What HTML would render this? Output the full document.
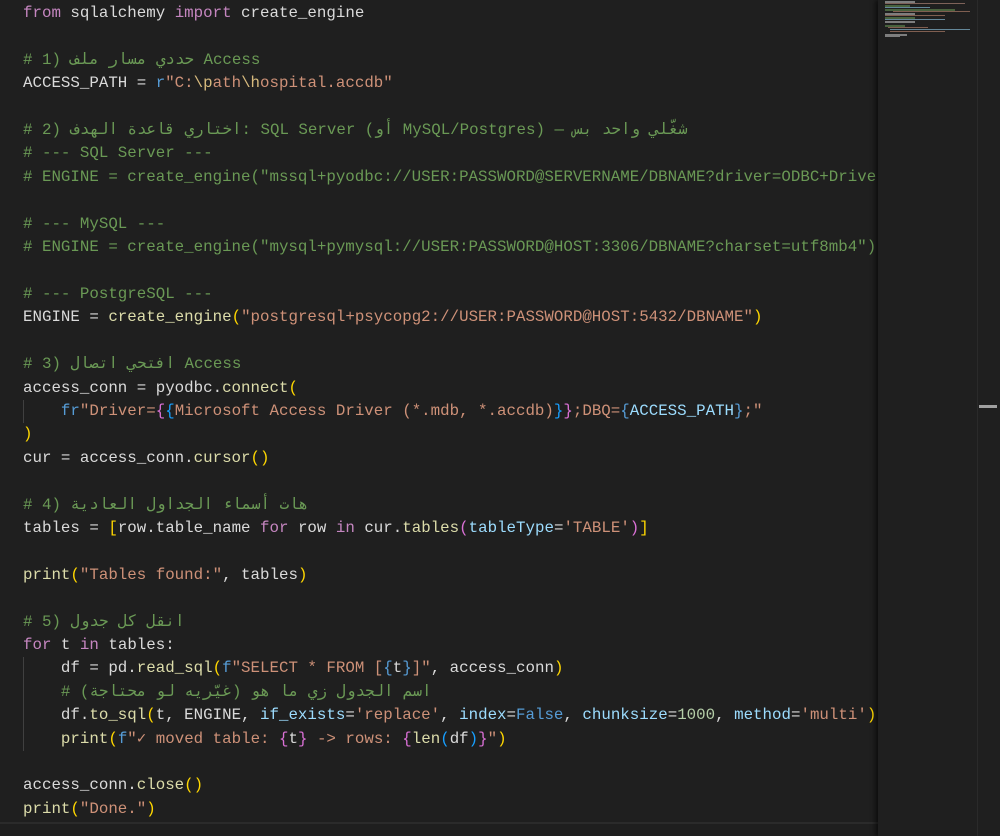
<!DOCTYPE html>
<html><head><meta charset="utf-8"><style>
html,body{margin:0;padding:0;background:#1f1f1f;width:1000px;height:836px;overflow:hidden}
#code{position:absolute;left:0;top:2px;width:878px;height:820px;overflow:hidden;font-family:"Liberation Mono","DejaVu Sans Mono",monospace;font-size:15.8px;line-height:23.41px;color:#dadada}
.l{padding-left:23px;height:23.41px;position:relative;white-space:pre}
.g{position:absolute;left:23px;top:0;width:1px;height:100%;background:#404040}
.k{color:#c586c0}.c{color:#6a9955}.s{color:#ce9178}.f{color:#dcdcaa}.v{color:#9cdcfe}.b{color:#569cd6}.n{color:#b5cea8}
.y{color:#ffd700}.p{color:#da70d6}.bl{color:#179fff}.e{color:#d7ba7d}
#mm{position:absolute;left:878px;top:0;width:99px;height:836px;background:#1f1f1f;box-shadow:-3px 0 4px rgba(0,0,0,.5)}
#mm div{position:absolute;height:1.5px;opacity:.55}
#sb{position:absolute;left:977px;top:0;width:23px;height:836px;background:#1f1f1f;border-left:1px solid #2a2a2a}
#thumb{position:absolute;left:1px;top:405px;width:18px;height:3px;background:#a0a0a0}
#hl{position:absolute;left:0;top:822px;width:878px;height:2px;background:#2b2b2b}
</style></head><body>
<div id="code"><div class="l"><span class="k">from</span> sqlalchemy <span class="k">import</span> create_engine</div><div class="l"> </div><div class="l"><span class="c"># 1) حددي مسار ملف Access</span></div><div class="l">ACCESS_PATH = <span class="b">r</span><span class="s">"C:</span><span class="e">\p</span><span class="s">ath</span><span class="e">\h</span><span class="s">ospital.accdb"</span></div><div class="l"> </div><div class="l"><span class="c"># 2) اختاري قاعدة الهدف: SQL Server (أو MySQL/Postgres) — شغّلي واحد بس</span></div><div class="l"><span class="c"># --- SQL Server ---</span></div><div class="l"><span class="c"># ENGINE = create_engine("mssql+pyodbc://USER:PASSWORD@SERVERNAME/DBNAME?driver=ODBC+Driver+17+for+SQL+Server")</span></div><div class="l"> </div><div class="l"><span class="c"># --- MySQL ---</span></div><div class="l"><span class="c"># ENGINE = create_engine("mysql+pymysql://USER:PASSWORD@HOST:3306/DBNAME?charset=utf8mb4")</span></div><div class="l"> </div><div class="l"><span class="c"># --- PostgreSQL ---</span></div><div class="l">ENGINE = <span class="f">create_engine</span><span class="y">(</span><span class="s">"postgresql+psycopg2://USER:PASSWORD@HOST:5432/DBNAME"</span><span class="y">)</span></div><div class="l"> </div><div class="l"><span class="c"># 3) افتحي اتصال Access</span></div><div class="l">access_conn = pyodbc.<span class="f">connect</span><span class="y">(</span></div><div class="l"><span class="g"></span>    <span class="b">fr</span><span class="s">"Driver=</span><span class="p">{</span><span class="bl">{</span><span class="s">Microsoft Access Driver (*.mdb, *.accdb)</span><span class="bl">}</span><span class="p">}</span><span class="s">;DBQ=</span><span class="b">{</span><span class="v">ACCESS_PATH</span><span class="b">}</span><span class="s">;"</span></div><div class="l"><span class="y">)</span></div><div class="l">cur = access_conn.<span class="f">cursor</span><span class="y">()</span></div><div class="l"> </div><div class="l"><span class="c"># 4) هات أسماء الجداول العادية</span></div><div class="l">tables = <span class="y">[</span>row.table_name <span class="k">for</span> row <span class="k">in</span> cur.<span class="f">tables</span><span class="p">(</span><span class="v">tableType</span>=<span class="s">'TABLE'</span><span class="p">)</span><span class="y">]</span></div><div class="l"> </div><div class="l"><span class="f">print</span><span class="y">(</span><span class="s">"Tables found:"</span>, tables<span class="y">)</span></div><div class="l"> </div><div class="l"><span class="c"># 5) انقل كل جدول</span></div><div class="l"><span class="k">for</span> t <span class="k">in</span> tables:</div><div class="l"><span class="g"></span>    df = pd.<span class="f">read_sql</span><span class="y">(</span><span class="b">f</span><span class="s">"SELECT * FROM [</span><span class="b">{</span>t<span class="b">}</span><span class="s">]"</span>, access_conn<span class="y">)</span></div><div class="l"><span class="g"></span>    <span class="c"># اسم الجدول زي ما هو (غيّريه لو محتاجة)</span></div><div class="l"><span class="g"></span>    df.<span class="f">to_sql</span><span class="y">(</span>t, ENGINE, <span class="v">if_exists</span>=<span class="s">'replace'</span>, <span class="v">index</span>=<span class="b">False</span>, <span class="v">chunksize</span>=<span class="n">1000</span>, <span class="v">method</span>=<span class="s">'multi'</span><span class="y">)</span></div><div class="l"><span class="g"></span>    <span class="f">print</span><span class="y">(</span><span class="b">f</span><span class="s">"✓ moved table: </span><span class="p">{</span>t<span class="p">}</span><span class="s"> -&gt; rows: </span><span class="p">{</span><span class="f">len</span><span class="bl">(</span>df<span class="bl">)</span><span class="p">}</span><span class="s">"</span><span class="y">)</span></div><div class="l"> </div><div class="l">access_conn.<span class="f">close</span><span class="y">()</span></div><div class="l"><span class="f">print</span><span class="y">(</span><span class="s">"Done."</span><span class="y">)</span></div></div>
<div id="hl"></div>
<div id="mm">
<div style="left:7px;top:1px;width:30px;background:#ccc"></div>
<div style="left:7px;top:2.5px;width:80px;background:#c98"></div>
<div style="left:7px;top:5px;width:25px;background:#6a9955"></div>
<div style="left:7px;top:6.5px;width:45px;background:#9cdcfe"></div>
<div style="left:7px;top:9px;width:70px;background:#6a9955"></div>
<div style="left:15px;top:10.5px;width:77px;background:#ce9178"></div>
<div style="left:7px;top:13px;width:30px;background:#ccc"></div>
<div style="left:7px;top:14.5px;width:60px;background:#ce9178"></div>
<div style="left:7px;top:17px;width:30px;background:#6a9955"></div>
<div style="left:7px;top:18.5px;width:60px;background:#9cdcfe"></div>
<div style="left:7px;top:21px;width:30px;background:#ccc"></div>
<div style="left:7px;top:25px;width:20px;background:#6a9955"></div>
<div style="left:10px;top:26.5px;width:40px;background:#ce9178"></div>
<div style="left:12px;top:28.5px;width:80px;background:#9cdcfe"></div>
<div style="left:12px;top:30.5px;width:55px;background:#ce9178"></div>
<div style="left:7px;top:34px;width:22px;background:#ccc"></div>
<div style="left:7px;top:35.5px;width:15px;background:#ccc"></div>
</div>
<div id="sb"><div id="thumb"></div></div>
</body></html>
